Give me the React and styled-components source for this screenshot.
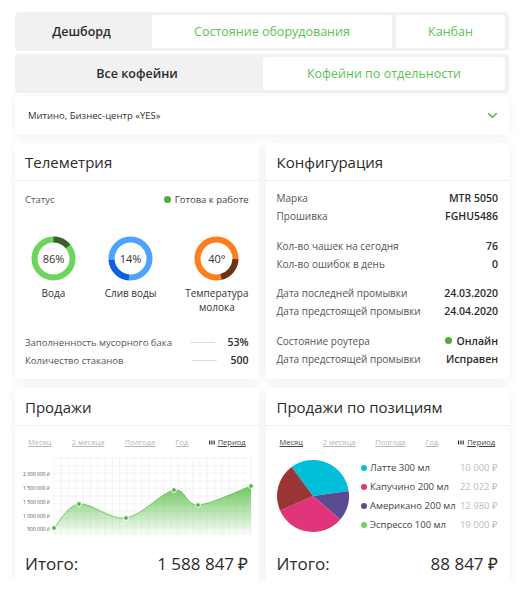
import React from "react";
import styled, { createGlobalStyle } from "styled-components";
import { ChevronDown } from "lucide-react";

const GlobalStyle = createGlobalStyle`
  * { box-sizing: border-box; }
  body {
    margin: 0;
    background: #ffffff;
    font-family: "Open Sans", "Liberation Sans", sans-serif;
    color: #2f2f2f;
  }
`;

const GREEN = "#5fbf57";

const Page = styled.div`
  width: 524px;
  padding: 12px 15px 0 15px;
  display: flex;
  flex-direction: column;
  gap: 3px;
`;

const TabBar = styled.div`
  display: flex;
  gap: 4px;
  height: 39px;
  padding: 3px 4px 3px 0;
  background: #f1f1f1;
  border-radius: 4px;
`;

const Tab = styled.div`
  display: flex;
  align-items: center;
  justify-content: center;
  flex: ${(p) => (p.$w ? `0 0 ${p.$w}px` : "1")};
  border-radius: 3px;
  font-size: 12.5px;
  background: ${(p) => (p.$active ? "transparent" : "#fff")};
  color: ${(p) => (p.$active ? "#2b2b2b" : GREEN)};
  font-weight: ${(p) => (p.$active ? 600 : 400)};
`;

const Select = styled.div`
  height: 39px;
  display: flex;
  align-items: center;
  justify-content: space-between;
  padding: 0 9px 0 13px;
  background: #fff;
  border-radius: 3px;
  box-shadow: 0 1px 8px rgba(0, 0, 0, 0.07);
  font-size: 9.5px;
  color: #333;
`;

const Grid = styled.div`
  margin-top: 5px;
  display: grid;
  grid-template-columns: minmax(0, 1fr) minmax(0, 1fr);
  column-gap: 7px;
  row-gap: 9px;
`;

const Card = styled.div`
  background: #fff;
  border-radius: 3px;
  box-shadow: 0 2px 12px rgba(0, 0, 0, 0.07);
  display: flex;
  flex-direction: column;
  min-width: 0;
`;

const CardHeader = styled.div`
  height: ${(p) => p.$h || 38}px;
  display: flex;
  align-items: center;
  padding: 0 ${(p) => p.$pad}px;
  border-bottom: 1px solid #efefef;
  font-size: 15px;
  font-weight: 500;
  color: #2b2b2b;
`;

const CardBody = styled.div`
  padding: ${(p) => p.$pt}px ${(p) => p.$pad}px ${(p) => p.$pb}px;
  display: flex;
  flex-direction: column;
  flex: 1;
`;

const Row = styled.div`
  display: flex;
  align-items: center;
  justify-content: space-between;
  height: ${(p) => p.$h || 18}px;
  font-size: ${(p) => p.$size || 9.5}px;
  color: #555;
  white-space: nowrap;
`;

const Value = styled.span`
  color: #2b2b2b;
  font-weight: 600;
  font-size: ${(p) => p.$size || 10.5}px;
  display: inline-flex;
  align-items: center;
  justify-content: flex-end;
  gap: 5px;
  min-width: ${(p) => p.$min || 0}px;
`;

const Dot = styled.span`
  width: ${(p) => p.$s || 7}px;
  height: ${(p) => p.$s || 7}px;
  border-radius: 50%;
  background: ${(p) => p.$c};
  display: inline-block;
  flex: none;
`;

const Status = styled.span`
  display: inline-flex;
  align-items: center;
  gap: 4px;
  color: #444;
`;

const Gauges = styled.div`
  display: flex;
  justify-content: space-between;
  align-items: flex-start;
  padding-left: 6px;
  margin-top: 29px;
`;

const Gauge = styled.div`
  display: flex;
  flex-direction: column;
  align-items: center;
`;

const GaugeLabel = styled.div`
  margin-top: 5px;
  font-size: 10px;
  line-height: 14px;
  font-weight: 500;
  text-align: center;
  color: #333;
`;

const Ring = styled.div`
  position: relative;
  width: 45px;
  height: 45px;
`;

const RingText = styled.div`
  position: absolute;
  inset: 0;
  display: flex;
  align-items: center;
  justify-content: center;
  font-size: 11px;
  color: #333;
`;

const StatRows = styled.div`
  margin-top: 19px;
`;

const Line = styled.span`
  display: inline-block;
  width: 25px;
  height: 1px;
  background: #ddd;
  margin-right: 12px;
`;

const Right = styled.span`
  display: inline-flex;
  align-items: center;
`;

const Group = styled.div`
  & + & {
    margin-top: 11.5px;
  }
`;

const Periods = styled.div`
  display: flex;
  justify-content: space-between;
  padding: 0 3px;
  height: 12px;
  align-items: center;
  font-size: 7.5px;
`;

const Period = styled.span`
  text-decoration: underline;
  color: ${(p) => (p.$active ? "#444" : "#b5b5b5")};
  display: inline-flex;
  align-items: center;
  gap: 3px;
`;

const ChartWrap = styled.div`
  margin: 6px 0 0 -11px;
  height: 84px;
`;

const Total = styled.div`
  margin-top: 14px;
  display: flex;
  justify-content: space-between;
  align-items: center;
  height: 22px;
  font-size: 17px;
  font-weight: 500;
  color: #2b2b2b;
`;

const PieRow = styled.div`
  margin-top: 6px;
  height: 84px;
  display: flex;
  align-items: center;
  justify-content: space-between;
`;

const Legend = styled.div`
  width: 137px;
  display: flex;
  flex-direction: column;
`;

const LegendItem = styled.div`
  height: 19px;
  display: flex;
  align-items: center;
  justify-content: space-between;
  font-size: 9.5px;
  color: #444;
  white-space: nowrap;
`;

const LegendName = styled.span`
  display: inline-flex;
  align-items: center;
  gap: 3px;
`;

const LegendValue = styled.span`
  color: #bdbdbd;
`;

const Donut = ({ base, accent, from, to, text }) => {
  const r = 19;
  const c = 2 * Math.PI * r;
  const len = ((to - from) / 360) * c;
  return (
    <Ring>
      <svg width="45" height="45" viewBox="0 0 45 45">
        <circle cx="22.5" cy="22.5" r={r} fill="none" stroke={base} strokeWidth="6" />
        <circle
          cx="22.5"
          cy="22.5"
          r={r}
          fill="none"
          stroke={accent}
          strokeWidth="6"
          strokeDasharray={`${len} ${c}`}
          transform={`rotate(${from - 90} 22.5 22.5)`}
        />
      </svg>
      <RingText>{text}</RingText>
    </Ring>
  );
};

const BarsIcon = () => (
  <svg width="6" height="5" viewBox="0 0 6 5">
    <rect x="0" y="0.5" width="1.2" height="4" fill="#333" />
    <rect x="2.3" y="0.5" width="1.2" height="4" fill="#333" />
    <rect x="4.6" y="0.5" width="1.2" height="4" fill="#333" />
  </svg>
);

const periods = ["Месяц", "2 месяца", "Полгода", "Год"];

const PeriodLinks = ({ active }) => (
  <Periods>
    {periods.map((p, i) => (
      <Period key={p} $active={active === i}>
        {p}
      </Period>
    ))}
    <Period $active>
      <BarsIcon />
      Период
    </Period>
  </Periods>
);

const points = [
  [40, 74],
  [65, 50],
  [112, 64],
  [160, 36],
  [184, 51],
  [237, 32],
];

const smoothPath = (pts) => {
  let d = `M${pts[0][0]},${pts[0][1]}`;
  for (let i = 0; i < pts.length - 1; i++) {
    const p0 = pts[i - 1] || pts[i];
    const p1 = pts[i];
    const p2 = pts[i + 1];
    const p3 = pts[i + 2] || p2;
    const c1 = [p1[0] + (p2[0] - p0[0]) / 6, p1[1] + (p2[1] - p0[1]) / 6];
    const c2 = [p2[0] - (p3[0] - p1[0]) / 6, p2[1] - (p3[1] - p1[1]) / 6];
    d += ` C${c1[0]},${c1[1]} ${c2[0]},${c2[1]} ${p2[0]},${p2[1]}`;
  }
  return d;
};

const yLabels = [
  ["2 000 000 ₽", 20],
  ["1 500 000 ₽", 34],
  ["1 500 000 ₽", 48],
  ["1 000 000 ₽", 62],
  ["500 000 ₽", 75],
];

const SalesChart = () => {
  const line = smoothPath(points);
  const area = `${line} L237,80 L40,80 Z`;
  const vLines = [];
  for (let x = 40; x <= 237.5; x += 7.3) vLines.push(x);
  const hLines = [];
  for (let y = 4; y <= 80.5; y += 7.6) hLines.push(y);
  return (
    <svg width="244" height="84" viewBox="0 0 244 84">
      <defs>
        <linearGradient id="salesFill" x1="0" y1="0" x2="0" y2="1">
          <stop offset="0" stopColor="#5cc14c" stopOpacity="0.9" />
          <stop offset="1" stopColor="#5cc14c" stopOpacity="0.03" />
        </linearGradient>
      </defs>
      {vLines.map((x) => (
        <line key={`v${x}`} x1={x} y1="4" x2={x} y2="80" stroke="#efefef" strokeWidth="0.7" />
      ))}
      {hLines.map((y) => (
        <line key={`h${y}`} x1="40" y1={y} x2="237" y2={y} stroke="#efefef" strokeWidth="0.7" />
      ))}
      <path d={area} fill="url(#salesFill)" />
      <path d={line} fill="none" stroke="#5cb84d" strokeWidth="0.8" />
      {points.map(([x, y]) => (
        <circle key={x} cx={x} cy={y} r="2.4" fill="#4cb83c" stroke="#fff" strokeWidth="1" />
      ))}
      {yLabels.map(([t, y], i) => (
        <text
          key={i}
          x="36"
          y={y + 1.8}
          textAnchor="end"
          fontSize="5"
          fill="#555"
          fontFamily="Open Sans, sans-serif"
        >
          {t}
        </text>
      ))}
    </svg>
  );
};

const slices = [
  { color: "#00bfdb", from: -126.5, to: -7.9 },
  { color: "#5a4b91", from: -7.9, to: 40.6 },
  { color: "#e0347b", from: 40.6, to: 156.2 },
  { color: "#9b3434", from: 156.2, to: 233.5 },
];

const Pie = () => {
  const cx = 36;
  const cy = 37;
  const r = 36;
  const pt = (a) => [cx + r * Math.cos((a * Math.PI) / 180), cy + r * Math.sin((a * Math.PI) / 180)];
  return (
    <svg width="72" height="74" viewBox="0 0 72 74">
      {slices.map((s) => {
        const [x1, y1] = pt(s.from);
        const [x2, y2] = pt(s.to);
        const large = s.to - s.from > 180 ? 1 : 0;
        return (
          <path
            key={s.color}
            d={`M${cx},${cy} L${x1},${y1} A${r},${r} 0 ${large} 1 ${x2},${y2} Z`}
            fill={s.color}
          />
        );
      })}
    </svg>
  );
};

const legend = [
  { name: "Латте 300 мл", value: "10 000 ₽", color: "#00bfdb" },
  { name: "Капучино 200 мл", value: "22 022 ₽", color: "#e0347b" },
  { name: "Американо 200 мл", value: "12 980 ₽", color: "#5a4b91" },
  { name: "Эспрессо 100 мл", value: "19 000 ₽", color: "#6ad85a" },
];

const App = () => (
  <>
    <GlobalStyle />
    <Page>
      <TabBar>
        <Tab $w={133} $active>
          Дешборд
        </Tab>
        <Tab $w={240}>Состояние оборудования</Tab>
        <Tab>Канбан</Tab>
      </TabBar>
      <TabBar>
        <Tab $w={244} $active>
          Все кофейни
        </Tab>
        <Tab>Кофейни по отдельности</Tab>
      </TabBar>
      <Select>
        Митино, Бизнес-центр «YES»
        <ChevronDown size={15} color={GREEN} strokeWidth={2.6} />
      </Select>

      <Grid>
        <Card>
          <CardHeader $h={38} $pad={10}>Телеметрия</CardHeader>
          <CardBody $pt={10} $pad={10} $pb={10}>
            <Row $h={16}>
              Статус
              <Status>
                <Dot $c="#4caf3a" />
                Готова к работе
              </Status>
            </Row>
            <Gauges>
              <Gauge>
                <Donut base="#6bd65b" accent="#3b5f32" from={0} to={50} text="86%" />
                <GaugeLabel>Вода</GaugeLabel>
              </Gauge>
              <Gauge>
                <Donut base="#4da3ff" accent="#0b5fe3" from={185} to={265} text="14%" />
                <GaugeLabel>Слив воды</GaugeLabel>
              </Gauge>
              <Gauge>
                <Donut base="#ff7d1c" accent="#6a3418" from={92} to={165} text="40°" />
                <GaugeLabel>
                  Температура
                  <br />
                  молока
                </GaugeLabel>
              </Gauge>
            </Gauges>
            <StatRows>
              <Row>
                Заполненность мусорного бака
                <Right>
                  <Line />
                  <Value $min={20}>53%</Value>
                </Right>
              </Row>
              <Row>
                Количество стаканов
                <Right>
                  <Line />
                  <Value $min={20}>500</Value>
                </Right>
              </Row>
            </StatRows>
          </CardBody>
        </Card>

        <Card>
          <CardHeader $h={38} $pad={11}>Конфигурация</CardHeader>
          <CardBody $pt={8} $pad={11} $pb={10}>
            <Group>
              <Row $size={10}>
                Марка<Value>MTR 5050</Value>
              </Row>
              <Row $size={10}>
                Прошивка<Value>FGHU5486</Value>
              </Row>
            </Group>
            <Group>
              <Row $size={10}>
                Кол-во чашек на сегодня<Value>76</Value>
              </Row>
              <Row $size={10}>
                Кол-во ошибок в день<Value>0</Value>
              </Row>
            </Group>
            <Group>
              <Row $size={10}>
                Дата последней промывки<Value>24.03.2020</Value>
              </Row>
              <Row $size={10}>
                Дата предстоящей промывки<Value>24.04.2020</Value>
              </Row>
            </Group>
            <Group>
              <Row $size={10}>
                Состояние роутера
                <Value>
                  <Dot $c="#4caf3a" />
                  Онлайн
                </Value>
              </Row>
              <Row $size={10}>
                Дата предстоящей промывки<Value>Исправен</Value>
              </Row>
            </Group>
          </CardBody>
        </Card>

        <Card>
          <CardHeader $h={38} $pad={10}>Продажи</CardHeader>
          <CardBody $pt={10} $pad={10} $pb={8}>
            <PeriodLinks active={-1} />
            <ChartWrap>
              <SalesChart />
            </ChartWrap>
            <Total>
              <span>Итого:</span>
              <span>1 588 847 ₽</span>
            </Total>
          </CardBody>
        </Card>

        <Card>
          <CardHeader $h={38} $pad={11}>Продажи по позициям</CardHeader>
          <CardBody $pt={10} $pad={11} $pb={8}>
            <PeriodLinks active={0} />
            <PieRow>
              <Pie />
              <Legend>
                {legend.map((l) => (
                  <LegendItem key={l.name}>
                    <LegendName>
                      <Dot $c={l.color} $s={6} />
                      {l.name}
                    </LegendName>
                    <LegendValue>{l.value}</LegendValue>
                  </LegendItem>
                ))}
              </Legend>
            </PieRow>
            <Total>
              <span>Итого:</span>
              <span>88 847 ₽</span>
            </Total>
          </CardBody>
        </Card>
      </Grid>
    </Page>
  </>
);

export default App;
